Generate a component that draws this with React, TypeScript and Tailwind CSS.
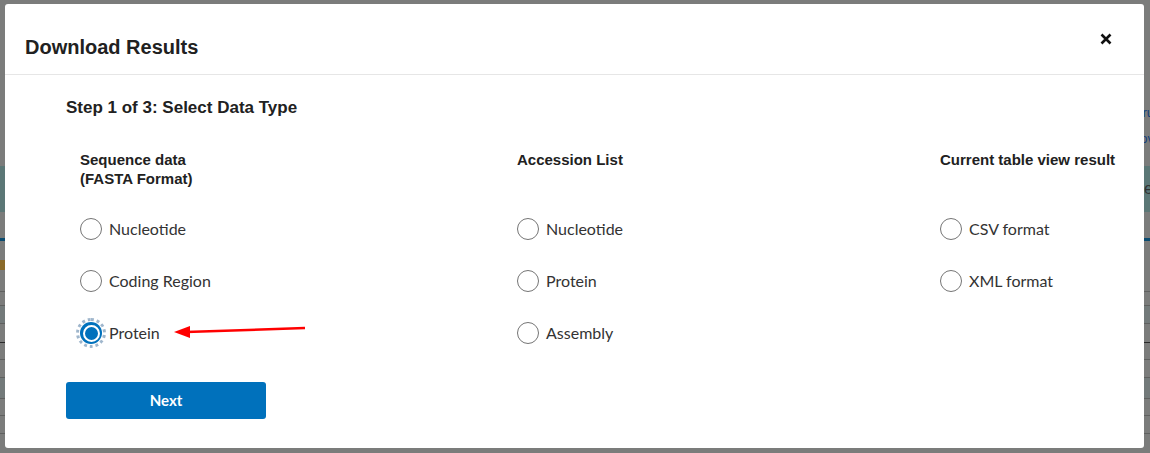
import React from "react";

function Radio({ label, checked = false }: { label: string; checked?: boolean }) {
  return (
    <label className="flex items-center h-[24px] gap-[7px]">
      {checked ? (
        <span className="relative flex items-center justify-center w-[22px] h-[22px]">
          <span className="absolute -inset-[4px] rounded-full border-[3px] border-dotted border-[#9fb6cc]" />
          <span className="w-[22px] h-[22px] rounded-full bg-[#0071bc] flex items-center justify-center">
            <span className="w-[17px] h-[17px] rounded-full border-[2px] border-white bg-[#0071bc]" />
          </span>
        </span>
      ) : (
        <span className="w-[22px] h-[22px] rounded-full border border-[#757575] bg-white" />
      )}
      <span className="text-[16px] text-[#333] font-['Lato',sans-serif]">{label}</span>
    </label>
  );
}

function Column({ heading, items, checkedIndex, className = "" }: { heading: React.ReactNode; items: string[]; checkedIndex?: number; className?: string }) {
  return (
    <div className={"flex flex-col " + className}>
      <div className="h-[67px] text-[15px] leading-[19px] font-bold text-[#212121] font-['Liberation_Sans',Arial,sans-serif]">{heading}</div>
      <div className="flex flex-col gap-[28px]">
        {items.map((it, i) => (
          <Radio key={it} label={it} checked={i === checkedIndex} />
        ))}
      </div>
    </div>
  );
}

export default function App() {
  return (
    <div className="relative w-[1150px] h-[453px] overflow-hidden bg-[#7b7c7b]">
      {/* dimmed page behind the modal */}
      <div className="flex flex-col w-full">
        <div className="h-[106px]" />
        <div className="h-[14px] flex justify-end text-[13px] text-[#16407a] font-['Liberation_Sans',sans-serif] leading-[14px]"><span className="mr-[-4px]">ru</span></div>
        <div className="h-[12px]" />
        <div className="h-[14px] flex justify-end text-[13px] text-[#16407a] font-['Liberation_Sans',sans-serif] leading-[14px]"><span className="mr-[-4px]">ov</span></div>
        <div className="h-[20px]" />
        <div className="h-[46px] bg-[#5b7776] flex items-center justify-end text-[16px] text-[#333] font-['Liberation_Sans',sans-serif]"><span className="mr-[-3px]">e</span></div>
        <div className="h-[26px]" />
        <div className="h-[3px] bg-[#0b4c70]" />
        <div className="h-[19px]" />
        <div className="h-[10px] w-[5px] bg-[#8a6a2a]" />
        <div className="h-[22px] border-b border-[#5f605f]" />
        <div className="h-[14px] border-b border-[#5f605f]" />
        <div className="h-[18px] border-b border-[#5f605f] bg-[#737a7a]" />
        <div className="h-[19px] border-b border-[#2a2a2a]" />
        <div className="h-[17px] border-b border-[#5f605f]" />
        <div className="h-[18px] border-b border-[#5f605f]" />
        <div className="h-[21px] border-b border-[#5f605f] bg-[#737a7a]" />
        <div className="h-[17px] border-b border-[#5f605f]" />
        <div className="h-[18px] border-b border-[#5f605f]" />
      </div>

      {/* modal */}
      <div className="absolute left-[5px] top-[4px] w-[1139px] h-[444px] bg-white rounded-[3px] flex flex-col">
        <div className="h-[71px] flex items-start justify-between pl-[20px] pr-[32px] pt-[32px] border-b border-[#e6e6e6]">
          <h1 className="text-[20px] leading-[23px] font-bold text-[#212121] font-['Liberation_Sans',Arial,sans-serif]">Download Results</h1>
          <svg width="12" height="12" viewBox="0 0 12 12" className="mt-[-3px]">
            <path d="M1.5 1.5 L10.5 10.5 M10.5 1.5 L1.5 10.5" stroke="#111" strokeWidth="2.6" strokeLinecap="butt" />
          </svg>
        </div>
        <div className="pl-[61px] pt-[23px] flex flex-col">
          <h2 className="text-[17px] leading-[20px] font-bold text-[#212121] font-['Liberation_Sans',Arial,sans-serif]">Step 1 of 3: Select Data Type</h2>
          <div className="relative flex pl-[14px] pt-[32px]">
            <Column
              className="w-[437px]"
              heading={<>Sequence data<br />(FASTA Format)</>}
              items={["Nucleotide", "Coding Region", "Protein"]}
              checkedIndex={2}
            />
            <Column className="w-[423px]" heading="Accession List" items={["Nucleotide", "Protein", "Assembly"]} />
            <Column className="w-[200px]" heading="Current table view result" items={["CSV format", "XML format"]} />
            {/* red annotation arrow */}
            <svg className="absolute left-[108px] top-[203px]" width="132" height="20" viewBox="0 0 132 20">
              <line x1="131" y1="7" x2="12" y2="11" stroke="#ff0000" strokeWidth="2.5" />
              <polygon points="0,11 16,5 16,17" fill="#ff0000" />
            </svg>
          </div>
          <button className="mt-[37px] w-[200px] h-[37px] rounded-[3px] bg-[#0071bc] text-white text-[15px] font-bold font-['Lato',sans-serif]">Next</button>
        </div>
      </div>
    </div>
  );
}
